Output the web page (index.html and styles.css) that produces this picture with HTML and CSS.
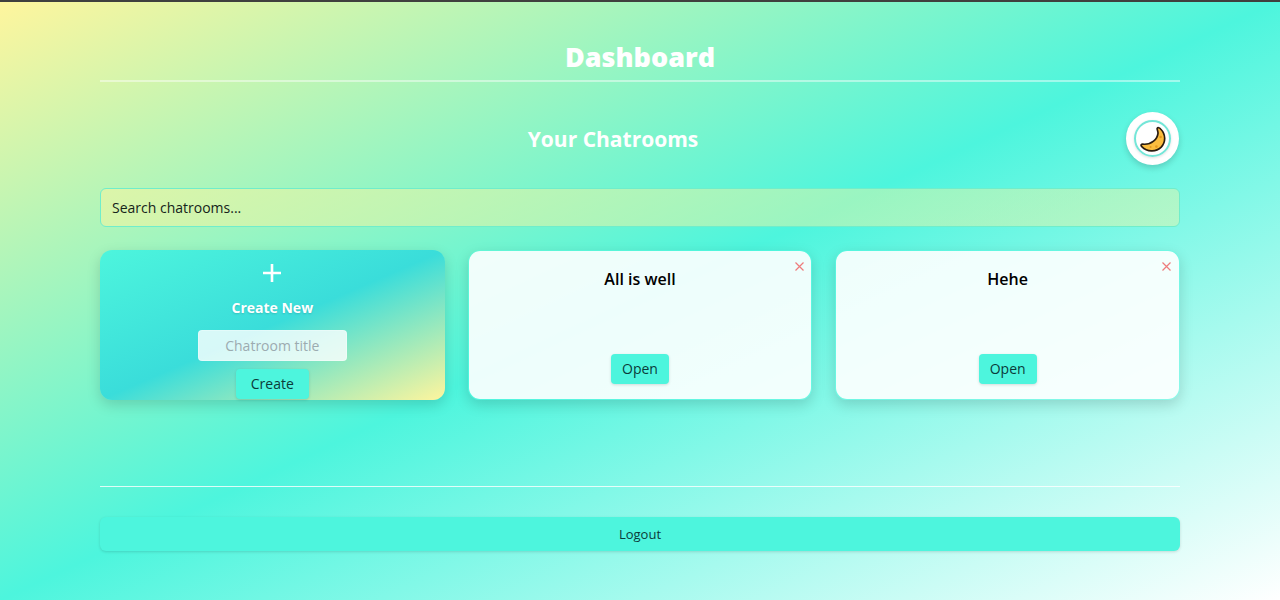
FILE: index.html
```html
<!DOCTYPE html>
<html lang="en">
<head>
<meta charset="utf-8">
<meta name="viewport" content="width=device-width, initial-scale=1">
<title>Dashboard</title>
<link rel="stylesheet" href="styles.css">
</head>
<body class="page">
<main class="dashboard">
  <header class="dashboard-header">
    <h1 class="dashboard-title">Dashboard</h1>
  </header>

  <section class="chatrooms">
    <div class="chatrooms-head">
      <h2 class="chatrooms-title">Your Chatrooms</h2>
      <button class="theme-toggle" type="button" aria-label="Toggle theme">
        <span class="theme-ring">
          <svg class="theme-icon" viewBox="0 0 26 26" aria-hidden="true">
            <path d="M17.2 2.4C16.8 3.4 18.2 5 18 7.4C17.4 13.2 11.6 18.8 3.4 18.2C1.2 17.8 .4 19.2 1.8 20.6C7 26 16 26.4 21.2 21.2C26.2 15.8 25.6 8 20.6 3C19.4 1.6 17.8 1.2 17.2 2.4Z" fill="#fbbd3f" stroke="#2a1c10" stroke-width="1.7" stroke-linejoin="round"/>
            <circle cx="20.6" cy="11" r="1.3" fill="#e59a1d"/>
            <circle cx="16.4" cy="20.6" r="1.3" fill="#e59a1d"/>
            <circle cx="10.6" cy="21" r="1" fill="#e59a1d"/>
          </svg>
        </span>
      </button>
    </div>

    <input class="search" type="search" placeholder="Search chatrooms..." aria-label="Search chatrooms">

    <div class="card-grid">
      <form class="card card-create">
        <svg class="plus" viewBox="0 0 18 18" aria-hidden="true"><path d="M9 0V18M0 9H18" stroke="#fff" stroke-width="2.6"/></svg>
        <h3 class="create-title">Create New</h3>
        <input class="create-input" type="text" placeholder="Chatroom title" aria-label="Chatroom title">
        <button class="btn btn-create" type="button">Create</button>
      </form>

      <article class="card card-room">
        <button class="room-delete" type="button" aria-label="Delete All is well"><svg class="cross" viewBox="0 0 9 9" aria-hidden="true"><path d="M.5.5L8.5 8.5M8.5.5L.5 8.5" stroke="#ee7c7c" stroke-width="1.2"/></svg></button>
        <h3 class="room-title">All is well</h3>
        <button class="btn" type="button">Open</button>
      </article>

      <article class="card card-room">
        <button class="room-delete" type="button" aria-label="Delete Hehe"><svg class="cross" viewBox="0 0 9 9" aria-hidden="true"><path d="M.5.5L8.5 8.5M8.5.5L.5 8.5" stroke="#ee7c7c" stroke-width="1.2"/></svg></button>
        <h3 class="room-title">Hehe</h3>
        <button class="btn" type="button">Open</button>
      </article>
    </div>
  </section>

  <footer class="dashboard-footer">
    <button class="logout" type="button">Logout</button>
  </footer>
</main>
</body>
</html>
```

FILE: styles.css
```css
* {
  box-sizing: border-box;
}

.page {
  margin: 0;
  min-height: 100vh;
  border-top: 2px solid #403f3e;
  background: linear-gradient(to bottom right, #fff59d, #4df5dd 50%, #fff) border-box;
  color: #000;
  font-family: "Segoe UI", "Open Sans", "Noto Sans", sans-serif;
}

button,
input {
  font: inherit;
}

.dashboard {
  max-width: 1112px;
  margin: 0 auto;
  padding: 36px 16px 48px;
}

.dashboard-header {
  border-bottom: 2px solid rgba(255, 255, 255, 0.45);
  padding-bottom: 4px;
}

.dashboard-title {
  margin: 0;
  color: #fff;
  font-size: 27px;
  font-weight: 800;
  line-height: 38px;
  text-align: center;
}

.chatrooms-head {
  display: flex;
  align-items: center;
  padding: 30px 1px 23px 0;
}

.chatrooms-title {
  flex: 1;
  margin: 0;
  color: #fff;
  font-size: 21px;
  font-weight: 700;
  line-height: 30px;
  text-align: center;
}

.theme-toggle {
  display: grid;
  place-items: center;
  width: 53px;
  height: 53px;
  padding: 0;
  border: 0;
  border-radius: 50%;
  background: #fff;
  box-shadow: 0 3px 6px rgba(0, 0, 0, 0.16);
}

.theme-ring {
  display: grid;
  place-items: center;
  width: 37px;
  height: 37px;
  border: 2px solid #74e6d8;
  border-radius: 50%;
  box-shadow: 0 1px 3px rgba(0, 0, 0, 0.12);
}

.theme-icon {
  width: 26px;
  height: 26px;
}

.search {
  display: block;
  width: 100%;
  height: 39px;
  padding: 0 11px;
  border: 1px solid #70edcb;
  border-radius: 6px;
  background: linear-gradient(to right, rgba(255, 245, 157, 0.5), rgba(255, 245, 157, 0.4));
  font-size: 14px;
  appearance: none;
}

.search::placeholder {
  color: #15241a;
  opacity: 1;
}

.card-grid {
  display: grid;
  grid-template-columns: repeat(3, minmax(0, 1fr));
  gap: 23px;
  padding: 23px 0 86px;
}

.card {
  display: flex;
  flex-direction: column;
  align-items: center;
  min-height: 150px;
  border-radius: 12px;
  box-shadow: 0 5px 14px rgba(0, 0, 0, 0.15);
}

.card-create {
  padding-top: 14px;
  background: linear-gradient(to bottom right, #4df5dd, #3addda 50%, #fff59d);
}

.plus {
  width: 18px;
  height: 18px;
}

.create-title {
  margin: 15px 0 12px;
  color: #fff;
  font-size: 14px;
  font-weight: 700;
  line-height: 21px;
  text-shadow: 0 1px 2px rgba(0, 0, 0, 0.15);
}

.create-input {
  width: 149px;
  height: 31px;
  margin-bottom: 8px;
  padding: 0 8px;
  border: 1px solid rgba(255, 255, 255, 0.3);
  border-radius: 4px;
  background: rgba(255, 255, 255, 0.8);
  font-size: 14px;
  text-align: center;
}

.create-input::placeholder {
  color: #9cabb0;
  opacity: 1;
}

.btn {
  height: 30px;
  padding: 0 11px;
  border: 0;
  border-radius: 4px;
  background: #4df5dd;
  box-shadow: 0 1px 3px rgba(0, 0, 0, 0.14);
  color: #0b3b3a;
  font-size: 14px;
  line-height: 30px;
}

.btn-create {
  padding: 0 15px;
}

.card-room {
  position: relative;
  justify-content: space-between;
  padding: 16px 16px 15px;
  border: 1px solid rgba(77, 245, 221, 0.4);
  background: rgba(255, 255, 255, 0.9) padding-box;
}

.room-title {
  margin: 0;
  font-size: 16px;
  font-weight: 600;
  line-height: 24px;
}

.room-delete {
  position: absolute;
  top: 7px;
  right: 4px;
  display: grid;
  place-items: center;
  width: 16px;
  height: 16px;
  padding: 0;
  border: 0;
  background: none;
}

.cross {
  width: 9px;
  height: 9px;
}

.dashboard-footer {
  padding-top: 30px;
  border-top: 1px solid rgba(255, 255, 255, 0.8);
}

.logout {
  display: block;
  width: 100%;
  height: 34px;
  border: 0;
  border-radius: 6px;
  background: #4df5dd;
  box-shadow: 0 1px 3px rgba(0, 0, 0, 0.14);
  color: #0b3b3a;
  font-size: 13px;
}
```
